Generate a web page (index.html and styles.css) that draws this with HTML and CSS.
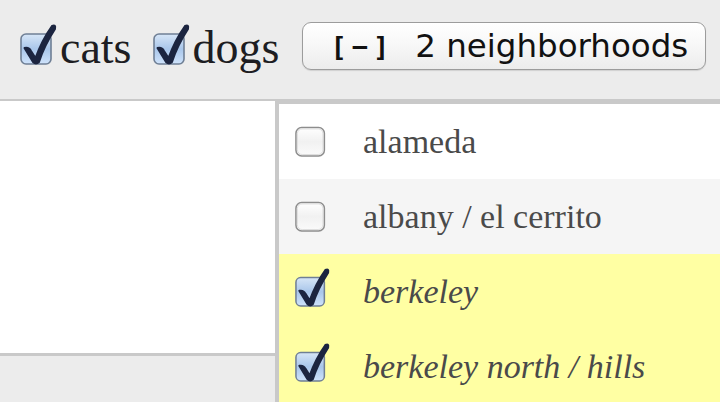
FILE: index.html
```html
<!DOCTYPE html>
<html lang="en">
<head>
<meta charset="UTF-8">
<meta name="viewport" content="width=device-width, initial-scale=1.0">
<title>Pets and neighborhoods</title>
<link rel="stylesheet" href="styles.css">
</head>
<body>
<div class="topbar">
    <label class="pet">
        <svg class="box top-box" viewBox="0 0 38 44"><use href="#checked"/></svg>cats
    </label>
    <label class="pet">
        <svg class="box top-box" viewBox="0 0 38 44"><use href="#checked"/></svg>dogs
    </label>
    <button class="hoods"><span class="toggle">[&minus;]</span>2 neighborhoods</button>
</div>
<div class="content"></div>
<div class="footer"></div>

<ul class="hood-menu">
    <li class="hood">
        <svg class="box" viewBox="0 0 38 44"><use href="#unchecked"/></svg>alameda
    </li>
    <li class="hood alt">
        <svg class="box" viewBox="0 0 38 44"><use href="#unchecked"/></svg>albany / el cerrito
    </li>
    <li class="hood picked">
        <svg class="box" viewBox="0 0 38 44"><use href="#checked"/></svg>berkeley
    </li>
    <li class="hood picked">
        <svg class="box" viewBox="0 0 38 44"><use href="#checked"/></svg>berkeley north / hills
    </li>
</ul>

<!-- shared checkbox drawings -->
<svg width="0" height="0" class="defs">
    <defs>
        <linearGradient id="blue" x1="0" y1="0" x2="0" y2="1">
            <stop offset="0" stop-color="#d7e6f7"/>
            <stop offset="0.5" stop-color="#a9c6ea"/>
            <stop offset="1" stop-color="#cfe3fb"/>
        </linearGradient>
        <linearGradient id="plain" x1="0" y1="0" x2="0" y2="1">
            <stop offset="0" stop-color="#ffffff"/>
            <stop offset="0.5" stop-color="#f1f1f1"/>
            <stop offset="1" stop-color="#fbfbfb"/>
        </linearGradient>
        <g id="unchecked">
            <rect x="1" y="12" width="30" height="30" rx="6" fill="url(#plain)" stroke="#8d8d8d" stroke-width="1.6"/>
            <rect x="2.5" y="13.5" width="27" height="27" rx="5" fill="none" stroke="#dcdcdc" stroke-width="1"/>
        </g>
        <g id="checked">
            <rect x="1" y="12" width="30" height="30" rx="5" fill="url(#blue)" stroke="#6f7f95" stroke-width="1.6"/>
            <path d="M4.5 26 Q9 25 11 29 L15.5 36 Q22 18 32 4 Q36 2 35 7 Q24 24 19 40 Q16 43 13 40 Z" fill="#1c2540" stroke="#1c2540" stroke-width="2" stroke-linejoin="round"/>
        </g>
    </defs>
</svg>
</body>
</html>
```

FILE: styles.css
```css
html {
    background-color: #ececec;
}
body {
    margin: 0;
    padding: 0;
    height: 402px;
    position: relative;
    background-color: #ececec;
    font-family: "Liberation Serif", "Times New Roman", serif;
    overflow: hidden;
}
.defs {
    position: absolute;
}
.topbar {
    height: 99px;
    border-bottom: 2px solid #c9c9c9;
    display: flex;
    align-items: center;
    padding-left: 20px;
}
.pet {
    display: flex;
    align-items: center;
    font-size: 46px;
    color: #1d1d22;
    margin-bottom: 5px;
    margin-right: 21px;
}
.pet:nth-child(2) {
    margin-right: 23px;
}
.box {
    width: 36px;
    height: 42px;
    margin-bottom: 10px;
    flex-shrink: 0;
}
.top-box {
    width: 38px;
    height: 44px;
    margin-bottom: 6px;
    margin-right: 2px;
}
.hoods {
    width: 404px;
    height: 48px;
    margin-bottom: 7px;
    padding: 0 0 0 27px;
    display: flex;
    align-items: center;
    border: 1px solid #9c9c9c;
    border-radius: 9px;
    background: linear-gradient(#ffffff, #f7f7f7 50%, #ececec);
    box-shadow: 0 1px 1px rgba(0, 0, 0, 0.12);
    font-family: "DejaVu Sans", Verdana, sans-serif;
    font-size: 32.5px;
    color: #111;
}
.toggle {
    font-family: "DejaVu Sans Mono", monospace;
    font-weight: bold;
    font-size: 27px;
    letter-spacing: 5px;
    margin-right: 21px;
}
.content {
    height: 252px;
    background-color: #fff;
    border-bottom: 3px solid #c9c9c9;
}
.hood-menu {
    position: absolute;
    top: 101px;
    left: 275px;
    right: 0;
    margin: 0;
    padding: 0;
    list-style: none;
    border-top: 3px solid #c9c9c9;
    border-left: 4px solid #c9c9c9;
    background-color: #fff;
}
.hood {
    height: 75px;
    display: flex;
    align-items: center;
    padding-left: 16px;
    font-size: 34px;
    color: #4a4a4a;
}
.hood .box {
    margin-right: 32px;
}
.hood.alt {
    background-color: #f5f5f5;
}
.hood.picked {
    background-color: #ffffa3;
    font-style: italic;
}
```
